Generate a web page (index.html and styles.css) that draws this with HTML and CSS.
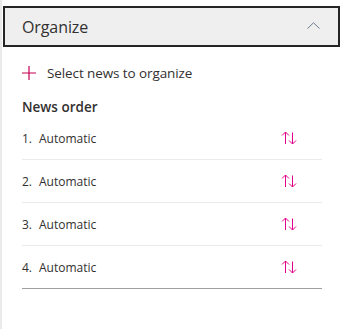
FILE: index.html
```html
<!DOCTYPE html>
<html lang="en">
<head>
    <meta charset="UTF-8">
    <meta name="viewport" content="width=device-width, initial-scale=1.0">
    <title>Organize</title>
    <link rel="stylesheet" href="styles.css">
</head>
<body>
    <!-- section header -->
    <div class="section-head">
        <span class="section-title">Organize</span>
        <svg class="chevron" width="13" height="7" viewBox="0 0 13 7">
            <path d="M0.5 6.5 L6.5 0.8 L12.5 6.5" fill="none" stroke="#6d7a8c" stroke-width="1"/>
        </svg>
    </div>

    <div class="panel">
        <!-- select link -->
        <div class="select-row">
            <svg class="plus" width="14" height="14" viewBox="0 0 14 14">
                <path d="M7 0 V14 M0 7 H14" stroke="#c30052" stroke-width="1.2"/>
            </svg>
            <span>Select news to organize</span>
        </div>

        <div class="list-title">News order</div>

        <!-- news list -->
        <ul class="news-list">
            <li class="news-item">
                <span class="num">1.</span><span class="label">Automatic</span>
                <svg class="sort" width="16" height="16" viewBox="0 0 16 16">
                    <path d="M4.5 14 V2 M1 5.5 L4.5 2 L8 5.5 M11.5 2.5 V14 M8 10.5 L11.5 14 L15 10.5" fill="none" stroke="#e3008c" stroke-width="1"/>
                </svg>
            </li>
            <li class="news-item">
                <span class="num">2.</span><span class="label">Automatic</span>
                <svg class="sort" width="16" height="16" viewBox="0 0 16 16">
                    <path d="M4.5 14 V2 M1 5.5 L4.5 2 L8 5.5 M11.5 2.5 V14 M8 10.5 L11.5 14 L15 10.5" fill="none" stroke="#e3008c" stroke-width="1"/>
                </svg>
            </li>
            <li class="news-item">
                <span class="num">3.</span><span class="label">Automatic</span>
                <svg class="sort" width="16" height="16" viewBox="0 0 16 16">
                    <path d="M4.5 14 V2 M1 5.5 L4.5 2 L8 5.5 M11.5 2.5 V14 M8 10.5 L11.5 14 L15 10.5" fill="none" stroke="#e3008c" stroke-width="1"/>
                </svg>
            </li>
            <li class="news-item">
                <span class="num">4.</span><span class="label">Automatic</span>
                <svg class="sort" width="16" height="16" viewBox="0 0 16 16">
                    <path d="M4.5 14 V2 M1 5.5 L4.5 2 L8 5.5 M11.5 2.5 V14 M8 10.5 L11.5 14 L15 10.5" fill="none" stroke="#e3008c" stroke-width="1"/>
                </svg>
            </li>
        </ul>
    </div>
</body>
</html>
```

FILE: styles.css
```css
* { box-sizing: border-box; }
html, body { height: 100%; }
body {
    margin: 0;
    border-left: 2px solid #eaeaea;
    font-family: "Segoe UI", "Open Sans", Arial, sans-serif;
    color: #323130;
    background: white;
}

/* 标题栏 */
.section-head {
    margin: 6px 1px 0 1px;
    height: 41px;
    padding: 0 18px 0 17px;
    border: 2px solid #252525;
    background: #efefef;
    display: flex;
    align-items: center;
    justify-content: space-between;
}
.section-title { font-size: 16px; letter-spacing: -0.1px; }
.chevron { display: block; margin-top: -2px; }

/* 内容 */
.panel { padding: 0 19px 0 20px; }

.select-row {
    margin-top: 16px;
    display: flex;
    align-items: center;
    gap: 11px;
    font-size: 13.5px;
    line-height: 20px;
    letter-spacing: -0.1px;
}
.plus { display: block; }

.list-title {
    margin-top: 14px;
    font-size: 13.5px;
    font-weight: 600;
    line-height: 20px;
}

.news-list { list-style: none; margin: 0; padding: 0; }
.news-item {
    height: 43px;
    display: flex;
    align-items: center;
    border-bottom: 1px solid #edebe9;
    font-size: 12px;
}
.news-item:last-child { border-bottom-color: #a19f9d; }
.num { width: 17px; }
.label { flex: 1; }
.sort { display: block; margin-right: 25px; }
```
